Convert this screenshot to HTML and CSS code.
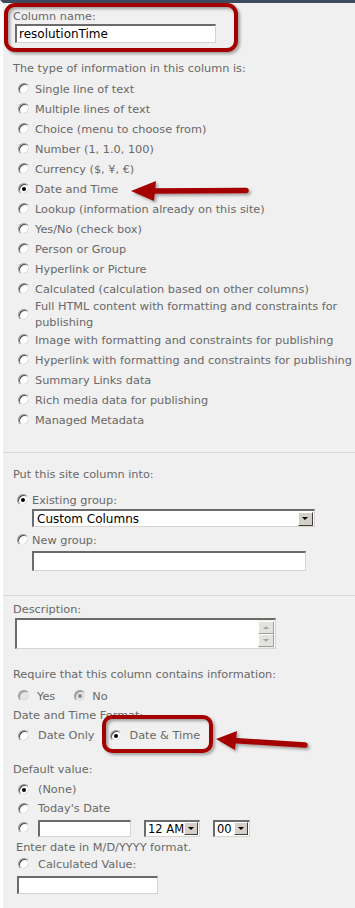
FILE: index.html
```html
<!DOCTYPE html>
<html lang="en">
<head>
    <meta charset="UTF-8">
    <meta name="viewport" content="width=device-width, initial-scale=1.0">
    <title>Create Site Column</title>
    <link rel="stylesheet" href="styles.css">
</head>
<body>
    <div class="page">
        <div class="section section-name">
            <div class="label label-name">Column name:</div>
            <div class="textbox textbox-name">resolutionTime</div>

            <div class="label label-type">The type of information in this column is:</div>
            <ul class="options">
                <li><span class="radio"></span>Single line of text</li>
                <li><span class="radio"></span>Multiple lines of text</li>
                <li><span class="radio"></span>Choice (menu to choose from)</li>
                <li><span class="radio"></span>Number (1, 1.0, 100)</li>
                <li><span class="radio"></span>Currency ($, ¥, €)</li>
                <li><span class="radio on"></span>Date and Time</li>
                <li><span class="radio"></span>Lookup (information already on this site)</li>
                <li><span class="radio"></span>Yes/No (check box)</li>
                <li><span class="radio"></span>Person or Group</li>
                <li><span class="radio"></span>Hyperlink or Picture</li>
                <li><span class="radio"></span>Calculated (calculation based on other columns)</li>
                <li class="two-line"><span class="radio"></span><span>Full HTML content with formatting and constraints for publishing</span></li>
                <li><span class="radio"></span>Image with formatting and constraints for publishing</li>
                <li><span class="radio"></span>Hyperlink with formatting and constraints for publishing</li>
                <li><span class="radio"></span>Summary Links data</li>
                <li><span class="radio"></span>Rich media data for publishing</li>
                <li><span class="radio"></span>Managed Metadata</li>
            </ul>
        </div>

        <div class="section section-group">
            <div class="label label-group">Put this site column into:</div>
            <div class="group-row"><span class="radio on"></span>Existing group:</div>
            <div class="select select-group">
                <span class="select-text">Custom Columns</span>
                <span class="select-btn"></span>
            </div>
            <div class="group-row group-new"><span class="radio"></span>New group:</div>
            <div class="textbox textbox-group"></div>
        </div>

        <div class="section section-settings">
            <div class="label label-desc">Description:</div>
            <div class="textarea">
                <div class="scrollbar">
                    <span class="scroll-btn up"></span>
                    <span class="scroll-btn down"></span>
                </div>
            </div>

            <div class="label label-require">Require that this column contains information:</div>
            <div class="inline-row row-require">
                <span class="radio off"></span><span class="opt">Yes</span>
                <span class="radio off on"></span><span class="opt">No</span>
            </div>

            <div class="label label-format">Date and Time Format:</div>
            <div class="inline-row row-format">
                <span class="radio"></span><span class="opt">Date Only</span>
                <span class="radio on"></span><span class="opt">Date &amp; Time</span>
            </div>

            <div class="label label-default">Default value:</div>
            <div class="default-row"><span class="radio on"></span>(None)</div>
            <div class="default-row"><span class="radio"></span>Today's Date</div>
            <div class="default-row date-row">
                <span class="radio"></span>
                <div class="textbox textbox-date"></div>
                <div class="select select-hour">
                    <span class="select-text">12 AM</span>
                    <span class="select-btn"></span>
                </div>
                <div class="select select-min">
                    <span class="select-text">00</span>
                    <span class="select-btn"></span>
                </div>
            </div>
            <div class="hint">Enter date in M/D/YYYY format.</div>
            <div class="default-row row-calc"><span class="radio"></span>Calculated Value:</div>
            <div class="textbox textbox-calc"></div>
        </div>
    </div>

    <!-- screenshot annotations -->
    <svg class="marks" width="355" height="908" viewBox="0 0 355 908">
        <defs>
            <filter id="shadow" x="-20%" y="-40%" width="140%" height="180%">
                <feDropShadow dx="2" dy="2" stdDeviation="1.5" flood-color="#000" flood-opacity="0.35"/>
            </filter>
        </defs>
        <g filter="url(#shadow)" fill="none" stroke="#a50000" stroke-width="4">
            <rect x="6" y="5" width="230" height="45" rx="9"/>
            <rect x="104" y="717" width="107" height="34" rx="8"/>
        </g>
        <g filter="url(#shadow)">
            <line x1="152" y1="191" x2="246" y2="190.5" stroke="#a50000" stroke-width="5.5" stroke-linecap="round"/>
            <polygon points="131,191 156,181 154,201" fill="#a50000"/>
            <line x1="233" y1="740.5" x2="305" y2="745" stroke="#a50000" stroke-width="5.5" stroke-linecap="round"/>
            <polygon points="216,739 237,731 235,750" fill="#a50000"/>
        </g>
    </svg>
</body>
</html>
```

FILE: styles.css
```css
body {
    margin: 0;
    padding: 0;
    font-family: "DejaVu Sans", Verdana, sans-serif;
    font-size: 11.3px;
    color: #686868;
    background-color: #fff;
}

.page {
    min-height: 905px;
    border-top: 3px solid #3e4b5c;
    border-left: 3px solid #fff;
    background-color: #f0f0f0;
}

.section {
    padding-left: 10px;
    border-bottom: 1px solid #d9d9d9;
}

.label {
    line-height: 20px;
}

/* radio buttons, old windows look */
.radio {
    display: inline-block;
    position: relative;
    box-sizing: border-box;
    width: 12px;
    height: 12px;
    flex: none;
    border-radius: 50%;
    border: 1px solid;
    border-color: #9a9a9a #f4f4f4 #f4f4f4 #9a9a9a;
    background-color: #fff;
    box-shadow: inset 1px 1px 0 #4a4a4a, inset -1px -1px 0 #dcdcdc;
}

.radio.on::after {
    content: '';
    position: absolute;
    left: 3px;
    top: 3px;
    width: 4px;
    height: 4px;
    border-radius: 50%;
    background-color: #000;
}

.radio.off {
    background-color: #e6e6e6;
    box-shadow: inset 1px 1px 0 #9a9a9a, inset -1px -1px 0 #dcdcdc;
}

.radio.off.on::after {
    background-color: #8a8a8a;
}

.textbox {
    box-sizing: border-box;
    background-color: #fff;
    border-top: 2px solid #6b6b6b;
    border-left: 2px solid #6b6b6b;
    border-right: 1px solid #d6d3cc;
    border-bottom: 1px solid #d6d3cc;
    color: #000;
    font-size: 12px;
}

/* column name */
.section-name {
    padding-top: 7px;
    padding-bottom: 22px;
}

.label-name {
    line-height: 14px;
}

.textbox-name {
    width: 201px;
    height: 19px;
    margin-left: 2px;
    padding-left: 2px;
    line-height: 16px;
}

.label-type {
    margin-top: 16px;
}

.options {
    list-style-type: none;
    margin: 0;
    padding: 0 0 0 5px;
}

.options li {
    display: flex;
    align-items: center;
    height: 20px;
}

.options .radio {
    margin-right: 5px;
}

.options li.two-line {
    height: 32px;
    line-height: 16px;
    margin-bottom: -1px;
}

/* group */
.section-group {
    padding-top: 12px;
    padding-bottom: 24px;
}

.group-row {
    display: flex;
    align-items: center;
    height: 18px;
    margin-top: 6px;
    padding-left: 4px;
}

.group-row .radio {
    margin-right: 3px;
}

.group-new {
    margin-top: 4px;
}

.select {
    box-sizing: border-box;
    display: flex;
    align-items: center;
    justify-content: space-between;
    background-color: #fff;
    border-top: 2px solid #6b6b6b;
    border-left: 2px solid #6b6b6b;
    border-right: 1px solid #d6d3cc;
    border-bottom: 1px solid #d6d3cc;
    color: #000;
    font-size: 12px;
    white-space: nowrap;
    overflow: hidden;
}

.select-text {
    padding-left: 3px;
}

.select-btn {
    position: relative;
    box-sizing: border-box;
    width: 15px;
    height: 14px;
    flex: none;
    margin-right: 1px;
    background-color: #d4d0c8;
    border: 1px solid;
    border-color: #fff #404040 #404040 #fff;
}

.select-btn::after {
    content: '';
    position: absolute;
    left: 3px;
    top: 4px;
    border-left: 3px solid transparent;
    border-right: 3px solid transparent;
    border-top: 3px solid #000;
}

.select-group {
    width: 283px;
    height: 18px;
    margin-left: 19px;
}

.textbox-group {
    width: 274px;
    height: 20px;
    margin-top: 2px;
    margin-left: 19px;
}

/* settings */
.section-settings {
    padding-top: 6px;
    padding-bottom: 19px;
    border-bottom: none;
}

.label-desc {
    line-height: 16px;
}

.textarea {
    box-sizing: border-box;
    display: flex;
    justify-content: flex-end;
    width: 261px;
    height: 31px;
    margin-left: 2px;
    background-color: #fff;
    border-top: 2px solid #6b6b6b;
    border-left: 2px solid #6b6b6b;
    border-right: 1px solid #d6d3cc;
    border-bottom: 1px solid #d6d3cc;
}

.scrollbar {
    display: flex;
    flex-direction: column;
    width: 16px;
    margin-right: 1px;
    padding-top: 1px;
    background-color: #eeede5;
}

.scroll-btn {
    position: relative;
    box-sizing: border-box;
    height: 13px;
    background-color: #e4e2dc;
    border: 1px solid;
    border-color: #fff #9d9d9d #9d9d9d #fff;
}

.scroll-btn::after {
    content: '';
    position: absolute;
    left: 4px;
    border-left: 3px solid transparent;
    border-right: 3px solid transparent;
}

.scroll-btn.up::after {
    top: 4px;
    border-bottom: 3px solid #a5a5a5;
}

.scroll-btn.down::after {
    top: 4px;
    border-top: 3px solid #a5a5a5;
}

.label-require {
    margin-top: 16px;
}

.inline-row {
    display: flex;
    align-items: center;
    height: 20px;
    padding-left: 5px;
}

.row-require {
    margin-top: 1px;
}

.row-require .opt {
    margin-left: 7px;
    margin-right: 19px;
}

.row-require .opt:last-child {
    margin-left: 6px;
}

.row-format {
    height: 19px;
}

.row-format .opt {
    margin-left: 8px;
    margin-right: 16px;
}

.row-format .opt:last-child {
    margin-left: 7px;
}

.label-default {
    margin-top: 15px;
}

.default-row {
    display: flex;
    align-items: center;
    height: 19px;
    padding-left: 5px;
}

.default-row .radio {
    margin-right: 8px;
}

.date-row {
    height: 20px;
}

.textbox-date {
    width: 93px;
    height: 17px;
}

.select-hour {
    width: 56px;
    height: 17px;
    margin-left: 13px;
    font-size: 11.5px;
}

.select-min {
    width: 37px;
    height: 17px;
    margin-left: 13px;
    font-size: 11.5px;
}

.select-hour .select-text,
.select-min .select-text {
    padding-left: 2px;
}

.select-hour .select-btn,
.select-min .select-btn {
    height: 13px;
    width: 14px;
}

.hint {
    line-height: 17px;
    margin-top: 1px;
    padding-left: 3px;
}

.row-calc {
    height: 16px;
}

.textbox-calc {
    width: 141px;
    height: 18px;
    margin-top: 4px;
    margin-left: 4px;
}

/* annotations drawn over the screenshot */
.marks {
    position: absolute;
    left: 0;
    top: 0;
    pointer-events: none;
}
```
